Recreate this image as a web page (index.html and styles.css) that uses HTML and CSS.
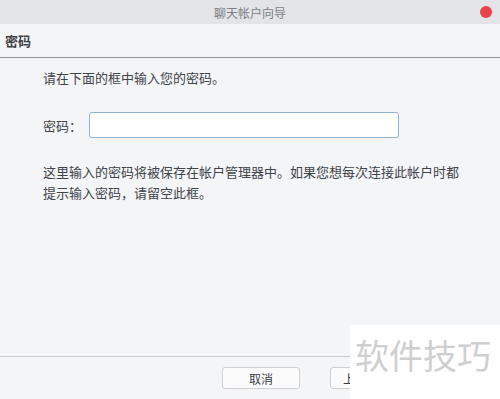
FILE: index.html
```html
<!DOCTYPE html>
<html>
<head>
<meta name="viewport" content="width=device-width, initial-scale=1">
<title>聊天帐户向导</title>
<link rel="stylesheet" href="styles.css">
</head>
<body>

<div class="window">
    <div class="titlebar">
        <span class="title">聊天帐户向导</span>
        <span class="close" title="关闭"></span>
    </div>

    <div class="page-header">密码</div>

    <div class="content">
        <p class="intro">请在下面的框中输入您的密码。</p>

        <div class="field">
            <label for="password">密码：</label>
            <input type="password" id="password" name="password">
        </div>

        <p class="note">这里输入的密码将被保存在帐户管理器中。如果您想每次连接此帐户时都提示输入密码，请留空此框。</p>
    </div>

    <div class="footer">
        <button type="button" class="cancelbtn">取消</button>
        <button type="button">上一步(B)</button>
    </div>
</div>

<!-- watermark over the corner -->
<div class="watermark">软件技巧</div>

</body>
</html>
```

FILE: styles.css
```css
body {
    margin: 0;
    font-family: "Noto Sans CJK SC", "Noto Sans", sans-serif;
    color: #404348;
    background-color: #f4f5f7;
}

.window {
    display: flex;
    flex-direction: column;
    height: 399px;
    overflow: hidden;
}

/* Title bar */
.titlebar {
    height: 24px;
    flex: none;
    display: flex;
    align-items: center;
    justify-content: center;
    position: relative;
    background-color: #e3e4e7;
}

.titlebar .title {
    font-size: 12px;
    color: #7c8089;
}

.titlebar .close {
    position: absolute;
    right: 8px;
    top: 6px;
    width: 12px;
    height: 12px;
    border-radius: 50%;
    background-color: #e8434b;
}

/* Section header */
.page-header {
    height: 33px;
    flex: none;
    display: flex;
    align-items: center;
    padding-left: 5px;
    font-size: 13px;
    font-weight: bold;
    color: #3f4146;
    border-bottom: 1px solid #8e8e8e;
}

/* Main content */
.content {
    flex: 1;
    padding: 9px 43px 0 43px;
    font-size: 13px;
    line-height: 21px;
}

.content p {
    margin: 0;
}

.field {
    display: flex;
    align-items: center;
    margin-top: 24px;
}

.field label {
    width: 46px;
}

.field input {
    width: 310px;
    height: 26px;
    box-sizing: border-box;
    border: 1px solid #8fb2d2;
    border-radius: 3px;
    background-color: #fff;
    outline: none;
}

.note {
    margin-top: 23px !important;
    width: 416px;
}

/* Footer buttons */
.footer {
    height: 43px;
    flex: none;
    display: flex;
    align-items: flex-start;
    padding: 10px 0 0 222px;
    border-top: 1px solid #c8c9cc;
    box-sizing: border-box;
}

.footer button {
    width: 78px;
    height: 22px;
    padding: 0;
    font-family: inherit;
    font-size: 12px;
    color: #3a3d42;
    background-color: #fbfbfc;
    border: 1px solid #cfd0d3;
    border-radius: 3px;
}

.footer .cancelbtn {
    margin-right: 30px;
}

.watermark {
    position: absolute;
    left: 350px;
    top: 325px;
    right: 0;
    bottom: 0;
    background-color: #fff;
    font-size: 34px;
    color: #cfcfcf;
    padding: 10px 0 0 5px;
    line-height: 40px;
}
```
